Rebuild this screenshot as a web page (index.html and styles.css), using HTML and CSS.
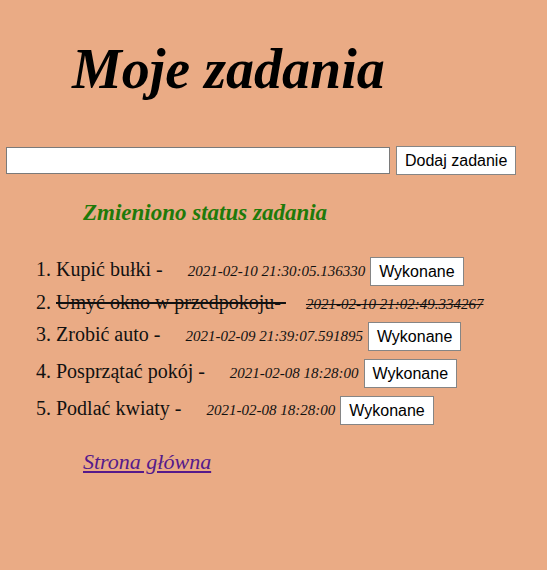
FILE: index.html
```html
<!DOCTYPE html>
<html lang="pl">
<head>
<meta charset="utf-8">
<title>Moje zadania</title>
<link rel="stylesheet" href="styles.css">
</head>
<body>
<h1 class="title">Moje zadania</h1>
<form class="add-form">
  <input class="add-input" type="text">
  <button class="btn" type="button">Dodaj zadanie</button>
</form>
<p class="status">Zmieniono status zadania</p>
<ol class="tasks">
  <li class="task"><span class="name">Kupić bułki - </span><span class="date">2021-02-10 21:30:05.136330</span> <button class="btn">Wykonane</button></li>
  <li class="task done"><span class="name">Umyć okno w przedpokoju- </span><span class="date">2021-02-10 21:02:49.334267</span></li>
  <li class="task"><span class="name">Zrobić auto - </span><span class="date">2021-02-09 21:39:07.591895</span> <button class="btn">Wykonane</button></li>
  <li class="task"><span class="name">Posprzątać pokój - </span><span class="date">2021-02-08 18:28:00</span> <button class="btn">Wykonane</button></li>
  <li class="task"><span class="name">Podlać kwiaty - </span><span class="date">2021-02-08 18:28:00</span> <button class="btn">Wykonane</button></li>
</ol>
<a class="home" href="#">Strona główna</a>
</body>
</html>
```

FILE: styles.css
```css
html, body {
  margin: 0;
  padding: 0;
  background: #eaab85;
}
body {
  padding: 0 6px;
  font-family: "Liberation Serif", serif;
  color: #111;
}
.title {
  margin: 0;
  padding: 36px 0 0 66px;
  font-family: "Liberation Serif", serif;
  font-style: italic;
  font-weight: bold;
  font-size: 56px;
  line-height: 66px;
  color: #000;
}
.add-form {
  display: flex;
  align-items: center;
  gap: 6px;
  margin-top: 44px;
}
.add-input {
  width: 384px;
  height: 27px;
  box-sizing: border-box;
  border: 1px solid #7a7a7a;
  background: #fff;
  margin: 0;
}
.btn {
  font-family: "Liberation Sans", Arial, sans-serif;
  font-size: 16px;
  line-height: 19px;
  padding: 4px 8px;
  border: 1px solid #858585;
  background: #fff;
  color: #000;
  border-radius: 0;
  margin: 0;
}
.status {
  margin: 24px 0 0 77px;
  font-family: "Liberation Serif", serif;
  font-style: italic;
  font-weight: bold;
  font-size: 23px;
  line-height: 28px;
  color: #1f7a0a;
}
.tasks {
  margin: 26px 0 0 0;
  padding-left: 50px;
  font-size: 20px;
}
.task {
  line-height: 32px;
  margin-bottom: 4px;
}
.task:first-child,
.task.done {
  margin-bottom: 0;
}
.task .date {
  font-style: italic;
  font-size: 15px;
  line-height: 1;
  margin-left: 20px;
}
.task .btn {
  vertical-align: middle;
}
.task.done .name,
.task.done .date {
  text-decoration: line-through;
}
.home {
  display: inline-block;
  margin: 20px 0 0 77px;
  font-family: "Liberation Serif", serif;
  font-style: italic;
  font-size: 22px;
  color: #551a8b;
}
```
